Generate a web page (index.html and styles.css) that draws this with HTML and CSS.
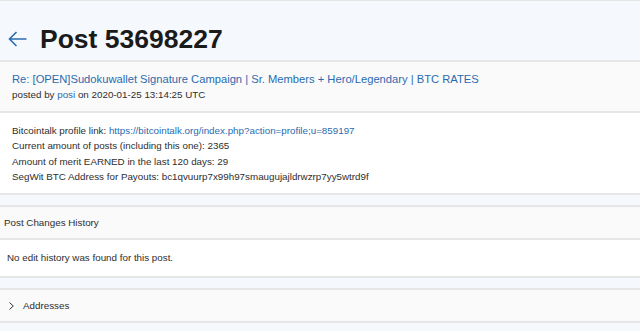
FILE: index.html
```html
<!DOCTYPE html>
<html lang="en">
<head>
  <meta charset="UTF-8" />
  <meta name="viewport" content="width=device-width, initial-scale=1.0"/>
  <title>Post 53698227</title>
  <link rel="stylesheet" href="styles.css">
</head>
<body>
  <header class="page-head">
    <a class="back" href="#" aria-label="Back">
      <svg width="19" height="16" viewBox="0 0 19 16" fill="none" stroke="#2a6bb0" stroke-width="1.6">
        <path d="M18.5 8H1.5M8.5 1L1.5 8l7 7"/>
      </svg>
    </a>
    <h1>Post 53698227</h1>
  </header>

  <section class="post">
    <div class="post-head">
      <a class="post-title" href="#">Re: [OPEN]Sudokuwallet Signature Campaign | Sr. Members + Hero/Legendary | BTC RATES</a>
      <div class="meta">posted by <a href="#">posi</a> on 2020-01-25 13:14:25 UTC</div>
    </div>
    <div class="post-body">
      <p>Bitcointalk profile link: <a href="#">https://bitcointalk.org/index.php?action=profile;u=859197</a></p>
      <p>Current amount of posts (including this one): 2365</p>
      <p>Amount of merit EARNED in the last 120 days: 29</p>
      <p>SegWit BTC Address for Payouts: bc1qvuurp7x99h97smaugujajldrwzrp7yy5wtrd9f</p>
    </div>
  </section>

  <section class="panel">
    <div class="panel-head">Post Changes History</div>
    <div class="panel-body">No edit history was found for this post.</div>
  </section>

  <section class="panel">
    <div class="panel-head toggle">
      <svg class="chev" width="5" height="8" viewBox="0 0 5 8" fill="none" stroke="#333" stroke-width="1">
        <path d="M0.5 0.5L4.3 4L0.5 7.5"/>
      </svg>
      Addresses
    </div>
  </section>
</body>
</html>
```

FILE: styles.css
```css
body {
  font-family: "Liberation Sans", Arial, sans-serif;
  margin: 0;
  background-color: #f5f9fe;
  color: #2e2e2e;
  border-top: 1px solid #e6e6e6;
}
a {
  color: #2a6bb0;
  text-decoration: none;
}
.page-head {
  display: flex;
  align-items: flex-end;
  height: 59px;
  padding: 0 8px 5px;
  box-sizing: border-box;
}
.back {
  display: flex;
  margin-right: 13px;
  margin-bottom: 8px;
}
h1 {
  margin: 0;
  font-size: 26.5px;
  line-height: 32px;
  font-weight: bold;
  color: #1b1b1b;
}
.post, .panel {
  border-top: 2px solid #e6e6e6;
  border-bottom: 2px solid #e6e6e6;
  background: #fff;
}
.panel {
  margin-top: 10px;
}
.post-head {
  background: #fafafa;
  border-bottom: 2px solid #e6e6e6;
  padding: 9px 12px;
  height: 31px;
}
.post-title {
  display: block;
  font-size: 11.2px;
  line-height: 16px;
}
.meta {
  font-size: 9.8px;
  line-height: 14px;
  margin-top: 1px;
}
.post-body {
  padding: 10px 12px 9px;
  font-size: 9.8px;
  line-height: 15.3px;
}
.post-body p {
  margin: 0;
}
.panel-head {
  background: #fafafa;
  height: 31px;
  line-height: 31px;
  padding: 0 4px;
  font-size: 9.8px;
}
.panel-body {
  border-top: 2px solid #e6e6e6;
  padding: 0 7px;
  height: 36px;
  line-height: 36px;
  font-size: 9.8px;
}
.toggle {
  display: flex;
  align-items: center;
  padding: 0 9px;
}
.chev {
  margin-right: 9px;
}
```
